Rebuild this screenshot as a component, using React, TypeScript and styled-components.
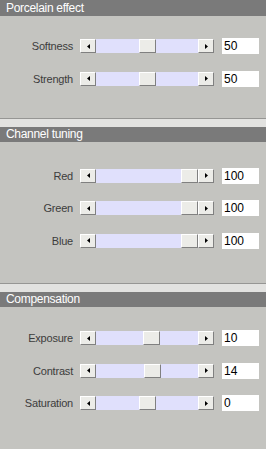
import React from "react";
import styled, { createGlobalStyle } from "styled-components";

type Slider = {
  label: string;
  value: number;
  min: number;
  max: number;
};

type Group = {
  title: string;
  padTop: number;
  first?: boolean;
  sliders: Slider[];
};

const groups: Group[] = [
  {
    title: "Porcelain effect",
    padTop: 23,
    first: true,
    sliders: [
      { label: "Softness", value: 50, min: 0, max: 100 },
      { label: "Strength", value: 50, min: 0, max: 100 },
    ],
  },
  {
    title: "Channel tuning",
    padTop: 27,
    sliders: [
      { label: "Red", value: 100, min: 0, max: 100 },
      { label: "Green", value: 100, min: 0, max: 100 },
      { label: "Blue", value: 100, min: 0, max: 100 },
    ],
  },
  {
    title: "Compensation",
    padTop: 24,
    sliders: [
      { label: "Exposure", value: 10, min: -100, max: 100 },
      { label: "Contrast", value: 14, min: -100, max: 100 },
      { label: "Saturation", value: 0, min: -100, max: 100 },
    ],
  },
];

const TRACK_W = 102;
const THUMB_W = 17;

export default function App() {
  return (
    <>
      <Global />
      <Panel>
        {groups.map((g) => (
          <Section key={g.title} first={g.first}>
            <Header first={g.first}>{g.title}</Header>
            <Rows style={{ paddingTop: g.padTop }}>
              {g.sliders.map((s) => {
                const frac = (s.value - s.min) / (s.max - s.min);
                return (
                  <Row key={s.label}>
                    <Label>{s.label}</Label>
                    <Scrollbar>
                      <ArrowButton>
                        <svg width="3" height="5" viewBox="0 0 3 5">
                          <path d="M3 0 L0 2.5 L3 5 Z" fill="#000" />
                        </svg>
                      </ArrowButton>
                      <Track>
                        <Thumb style={{ left: Math.round(frac * (TRACK_W - THUMB_W)) }} />
                      </Track>
                      <ArrowButton>
                        <svg width="3" height="5" viewBox="0 0 3 5">
                          <path d="M0 0 L3 2.5 L0 5 Z" fill="#000" />
                        </svg>
                      </ArrowButton>
                    </Scrollbar>
                    <ValueBox>{s.value}</ValueBox>
                  </Row>
                );
              })}
            </Rows>
          </Section>
        ))}
      </Panel>
    </>
  );
}

const Global = createGlobalStyle`
  html, body {
    margin: 0;
    padding: 0;
    background: #c4c4c0;
  }
  body {
    font-family: "Liberation Sans", Arial, sans-serif;
  }
`;

const Panel = styled.div`
  width: 266px;
  height: 449px;
  background: #c4c4c0;
  display: flex;
  flex-direction: column;
  overflow: hidden;
`;

const Section = styled.div<{ first?: boolean }>`
  display: flex;
  flex-direction: column;
  border-top: ${(p) => (p.first ? "none" : "1px solid #969694")};
  padding-top: ${(p) => (p.first ? 0 : 8)}px;
  background: ${(p) =>
    p.first ? "#c4c4c0" : "linear-gradient(#e2e2e0 0, #e2e2e0 8px, #c4c4c0 8px)"};
  height: ${(p) => (p.first ? 119 : 167)}px;
  box-sizing: border-box;
`;

const Header = styled.div<{ first?: boolean }>`
  height: ${(p) => (p.first ? 16 : 15)}px;
  line-height: ${(p) => (p.first ? 16 : 15)}px;
  background: #7a7a7a;
  color: #fff;
  font-size: 12px;
  letter-spacing: -0.3px;
  padding-left: 6px;
  white-space: nowrap;
`;

const Rows = styled.div`
  display: flex;
  flex-direction: column;
  gap: 18.5px;
`;

const Row = styled.div`
  display: flex;
  align-items: center;
  height: 14px;
`;

const Label = styled.div`
  width: 73px;
  margin-right: 7px;
  text-align: right;
  font-size: 11px;
  letter-spacing: -0.2px;
  color: #3c3c3c;
  white-space: nowrap;
`;

const Scrollbar = styled.div`
  display: flex;
  width: 134px;
  height: 14px;
`;

const ArrowButton = styled.div`
  width: 16px;
  height: 14px;
  box-sizing: border-box;
  background: #ecece8;
  border-top: 1px solid #ffffff;
  border-left: 1px solid #ffffff;
  border-right: 1px solid #808080;
  border-bottom: 1px solid #808080;
  display: flex;
  align-items: center;
  justify-content: center;
`;

const Track = styled.div`
  position: relative;
  flex: 1;
  height: 14px;
  background: #e0e0fc;
`;

const Thumb = styled.div`
  position: absolute;
  top: 0;
  width: 17px;
  height: 14px;
  box-sizing: border-box;
  background: #ecece8;
  border-top: 1px solid #ffffff;
  border-left: 1px solid #ffffff;
  border-right: 1px solid #808080;
  border-bottom: 1px solid #808080;
`;

const ValueBox = styled.div`
  margin-left: 8px;
  width: 37px;
  height: 16px;
  line-height: 16px;
  background: #fff;
  font-size: 12px;
  color: #000;
  padding-left: 2px;
  box-sizing: border-box;
`;
